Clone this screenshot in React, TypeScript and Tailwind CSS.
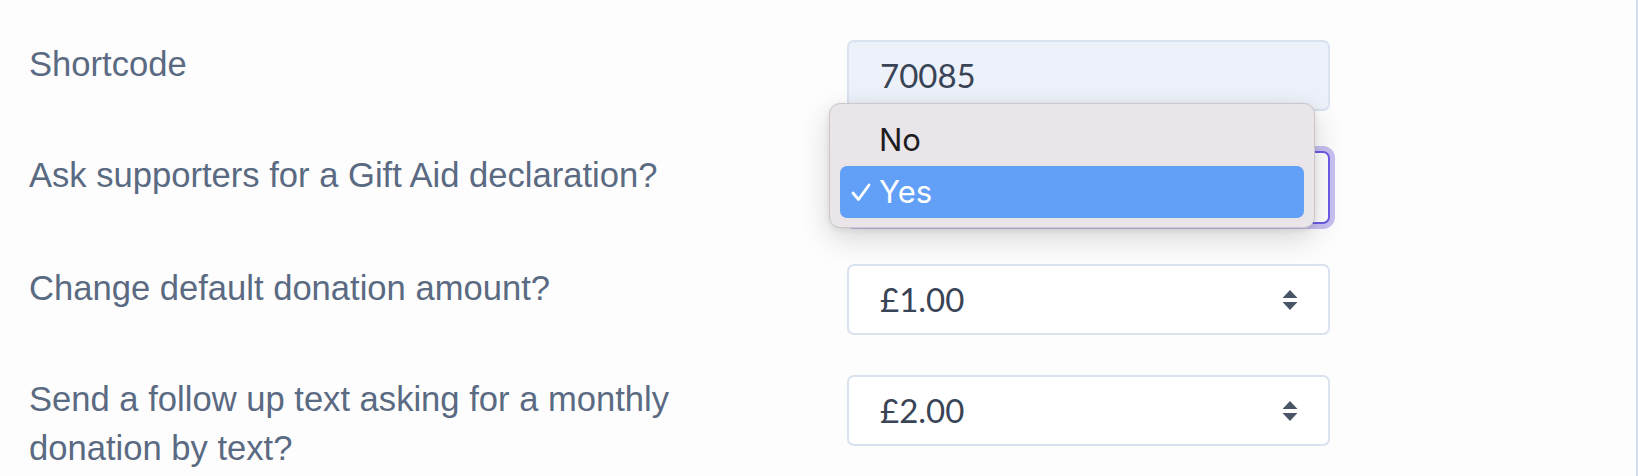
import React from 'react';

const SortArrows: React.FC = () => (
  <svg width="16" height="22" viewBox="0 0 16 22" className="shrink-0">
    <path d="M8 1 L15.5 9 L0.5 9 Z" fill="#4a5567" />
    <path d="M8 21 L15.5 13 L0.5 13 Z" fill="#4a5567" />
  </svg>
);

const CheckMark: React.FC = () => (
  <svg width="20" height="19" viewBox="0 0 20 19" className="shrink-0">
    <path d="M2 10 L7.5 16.5 L18 2" fill="none" stroke="#ffffff" strokeWidth="2.8" strokeLinecap="round" strokeLinejoin="round" />
  </svg>
);

const labelCls =
  "max-w-[700px] text-[34.6px] leading-[49px] text-[#5a6a82] font-['Liberation_Sans',Arial,sans-serif]";
const valueCls = "text-[33px] text-[#394456] font-['Lato',sans-serif]";

const OptionsMenu: React.FC = () => (
  <div className="absolute left-[-18px] top-[-48px] w-[486px] z-10 rounded-[11px] border border-[#cbc7ca] bg-[#eae5e8] px-[10px] pt-[10px] pb-[9px] shadow-[0_10px_30px_rgba(0,0,0,0.16),0_2px_6px_rgba(0,0,0,0.08)] font-['Inter',sans-serif]">
    <div className="flex h-[52px] items-center pl-[39px] text-[31px] text-[#1d1d1f]">No</div>
    <div className="flex h-[52px] items-center rounded-[7px] bg-[#62a0f8] text-[31px] text-white">
      <div className="flex w-[39px] justify-center pl-[2px]">
        <CheckMark />
      </div>
      <span>Yes</span>
    </div>
  </div>
);

const App: React.FC = () => {
  return (
    <div className="h-[476px] w-full bg-[#fdfdfd] border-r-2 border-[#d3dfee] overflow-hidden">
      <div className="flex flex-col gap-[40px] pl-[29px] pt-[40px]">
        <div className="grid grid-cols-[818px_483px] items-start">
          <div className={labelCls}>Shortcode</div>
          <div className="flex h-[71px] items-center rounded-[7px] border-2 border-[#d9e2ef] bg-[#edf1f9] pl-[31px]">
            <span className={valueCls}>70085</span>
          </div>
        </div>

        <div className="grid grid-cols-[818px_483px] items-start">
          <div className={labelCls}>Ask supporters for a Gift Aid declaration?</div>
          <div className="relative">
            {/* open select, its value is covered by the menu */}
            <div className="h-[73px] rounded-[7px] border-2 border-[#6c5ce7] bg-white ring-[5px] ring-[#c8c0f1]" />
            <OptionsMenu />
          </div>
        </div>

        <div className="grid grid-cols-[818px_483px] items-start">
          <div className={labelCls}>Change default donation amount?</div>
          <div className="flex h-[71px] items-center justify-between rounded-[7px] border-2 border-[#d9e2ef] bg-white pl-[31px] pr-[30px]">
            <span className={valueCls}>£1.00</span>
            <SortArrows />
          </div>
        </div>

        <div className="grid grid-cols-[818px_483px] items-start">
          <div className={labelCls}>Send a follow up text asking for a monthly donation by text?</div>
          <div className="flex h-[71px] items-center justify-between rounded-[7px] border-2 border-[#d9e2ef] bg-white pl-[31px] pr-[30px]">
            <span className={valueCls}>£2.00</span>
            <SortArrows />
          </div>
        </div>
      </div>
    </div>
  );
};

export default App;
